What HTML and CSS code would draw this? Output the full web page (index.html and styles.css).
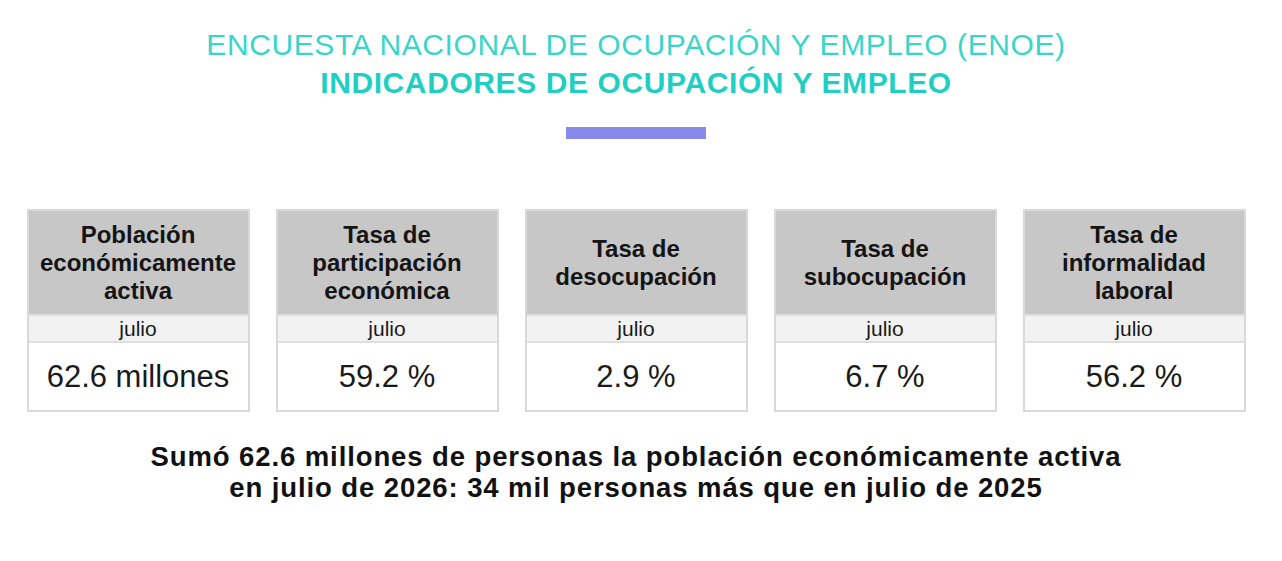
FILE: index.html
```html
<!DOCTYPE html>
<html lang="es">
<head>
<meta charset="utf-8">
<title>ENOE</title>
<link rel="stylesheet" href="styles.css">
</head>
<body>
<main class="page">
  <header class="titles">
    <h1 class="title-main">ENCUESTA NACIONAL DE OCUPACIÓN Y EMPLEO (ENOE)</h1>
    <h2 class="title-sub">INDICADORES DE OCUPACIÓN Y EMPLEO</h2>
    <div class="accent-bar"></div>
  </header>

  <section class="cards">
    <div class="card">
      <div class="card-head">Población<br>económicamente<br>activa</div>
      <div class="card-period">julio</div>
      <div class="card-value">62.6 millones</div>
    </div>
    <div class="card">
      <div class="card-head">Tasa de<br>participación<br>económica</div>
      <div class="card-period">julio</div>
      <div class="card-value">59.2 %</div>
    </div>
    <div class="card">
      <div class="card-head">Tasa de<br>desocupación</div>
      <div class="card-period">julio</div>
      <div class="card-value">2.9 %</div>
    </div>
    <div class="card">
      <div class="card-head">Tasa de<br>subocupación</div>
      <div class="card-period">julio</div>
      <div class="card-value">6.7 %</div>
    </div>
    <div class="card">
      <div class="card-head">Tasa de<br>informalidad<br>laboral</div>
      <div class="card-period">julio</div>
      <div class="card-value">56.2 %</div>
    </div>
  </section>

  <p class="summary">Sumó 62.6 millones de personas la población económicamente activa<br>en julio de 2026: 34 mil personas más que en julio de 2025</p>
</main>
</body>
</html>
```

FILE: styles.css
```css
* { box-sizing: border-box; }

html, body {
  margin: 0;
  padding: 0;
  background: #ffffff;
}

body {
  font-family: "Liberation Sans", Arial, sans-serif;
  color: #111111;
}

.page {
  width: 1272px;
  display: flex;
  flex-direction: column;
  align-items: center;
  padding-top: 26px;
}

.titles {
  display: flex;
  flex-direction: column;
  align-items: center;
}

.title-main,
.title-sub {
  margin: 0;
  font-size: 30px;
  line-height: 38px;
  letter-spacing: 0.6px;
  text-align: center;
}

.title-main { font-weight: 400; color: #3ad5ca; }
.title-sub { font-weight: 700; color: #1fcfc3; }

.accent-bar {
  width: 140px;
  height: 12px;
  margin-top: 25px;
  background: #8989ec;
}

.cards {
  display: flex;
  gap: 26px;
  margin-top: 70px;
}

.card {
  width: 223px;
  border: 2px solid #d9d9d9;
  display: flex;
  flex-direction: column;
  text-align: center;
}

.card-head {
  height: 103px;
  background: #c7c7c7;
  font-weight: 700;
  font-size: 24px;
  line-height: 28px;
  display: flex;
  align-items: center;
  justify-content: center;
  color: #141414;
}

.card-period {
  height: 29px;
  border-top: 2px solid #dedede;
  border-bottom: 2px solid #dedede;
  background: #f2f2f2;
  font-size: 21px;
  line-height: 25px;
  color: #1a1a1a;
}

.card-value {
  height: 67px;
  font-size: 31px;
  display: flex;
  align-items: center;
  justify-content: center;
  color: #1a1a1a;
}

.summary {
  margin: 29px 0 0;
  font-size: 27.5px;
  line-height: 31px;
  letter-spacing: 0.9px;
  font-weight: 700;
  text-align: center;
  color: #111111;
}
```
